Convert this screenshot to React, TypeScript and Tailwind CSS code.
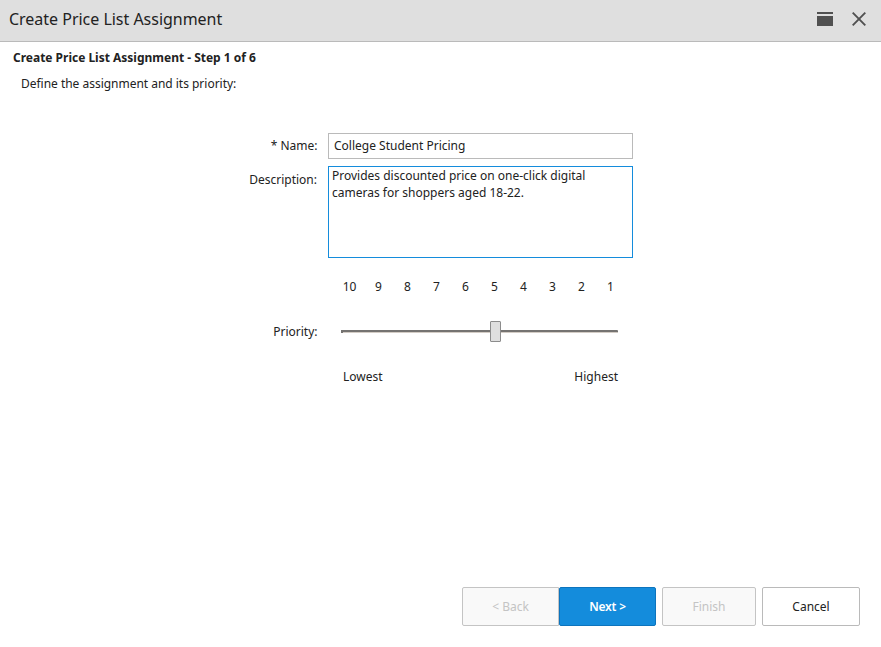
const ticks = [10, 9, 8, 7, 6, 5, 4, 3, 2, 1];

export default function App() {
  return (
    <div className="flex h-[647px] w-[881px] flex-col overflow-hidden bg-white font-['Noto_Sans',sans-serif] text-[12px] leading-[17px] text-[#222]">
      <header className="flex h-[42px] shrink-0 items-center justify-between border-b border-[#bababa] bg-[#dfdfdf] pr-[15px] pb-[3px] pl-[9px]">
        <h1 className="text-[16px] leading-6 tracking-[-0.02px]">Create Price List Assignment</h1>
        <div className="flex items-center gap-[19px]">
          <svg width="16" height="14" viewBox="0 0 16 14"><path d="M0 0h16v2H0zM0 4h16v10H0z" fill="#505050" /></svg>
          <svg width="14" height="14" viewBox="0 0 14 14"><path d="M.7.7l12.6 12.6M13.3.7L.7 13.3" stroke="#505050" strokeWidth="1.9" /></svg>
        </div>
      </header>
      <main className="flex flex-1 flex-col">
        <h2 className="mt-[7px] ml-[13px] font-bold tracking-[-0.01px]">Create Price List Assignment - Step 1 of 6</h2>
        <p className="mt-[9px] ml-[21px] tracking-[-0.02px]">Define the assignment and its priority:</p>
        <div className="mt-[41px] grid grid-cols-[317px_305px] gap-x-[11px]">
          <label className="-mr-[0.5px] pt-[4px] text-right">* Name:</label>
          <div className="h-[26px] border border-[#bababa] px-[5px] pt-[3px]">College Student Pricing</div>
          <label className="mt-[7px] pt-[5px] text-right">Description:</label>
          <div className="mt-[7px] h-[92px] border border-[#148cdc] px-[3px]">Provides discounted price on one-click digital<br />cameras for shoppers aged 18-22.</div>
          <div className="col-start-2 mt-[20px] ml-[7px] flex">
            {ticks.map((n) => <span key={n} className="w-[29px] text-center">{n}</span>)}
          </div>
          <label className="mt-[28px] -mr-[0.5px] text-right">Priority:</label>
          <div className="mt-[26px] ml-[13px] flex h-[21px] w-[277px] items-center">
            <div className="h-[3px] w-[2px] bg-[#757371]" />
            <div className="h-[3px] w-[147px] border-b border-[#d3ccc5] bg-[#757371]" />
            <div className="h-[21px] w-[11px] rounded-[1px] border border-[#8c8c8c] bg-[#dfdfdf]" />
            <div className="h-[3px] flex-1 rounded-r-[1px] border-b border-[#d3ccc5] bg-[#757371]" />
          </div>
          <div className="col-start-2 mt-[26px] flex justify-between pr-[15px] pl-[15px]"><span>Lowest</span><span>Highest</span></div>
        </div>
        <footer className="mt-auto mb-[21px] flex justify-end pr-[21px]">
          <button className="h-[39px] w-[97px] rounded-l-[2px] border border-[#c4c4c4] bg-[#f9f9f9] text-[#c4c4c4]">&lt; Back</button>
          <button className="h-[39px] w-[97px] rounded-[2px] border border-[#0d74bd] bg-[#148cdc] font-semibold tracking-[-0.2px] text-white">Next &gt;</button>
          <button className="ml-[6px] h-[39px] w-[94px] rounded-[2px] border border-[#c4c4c4] bg-[#f9f9f9] text-[#c4c4c4]">Finish</button>
          <button className="ml-[6px] h-[39px] w-[98px] rounded-[2px] border border-[#bababa] bg-white">Cancel</button>
        </footer>
      </main>
    </div>
  );
}
